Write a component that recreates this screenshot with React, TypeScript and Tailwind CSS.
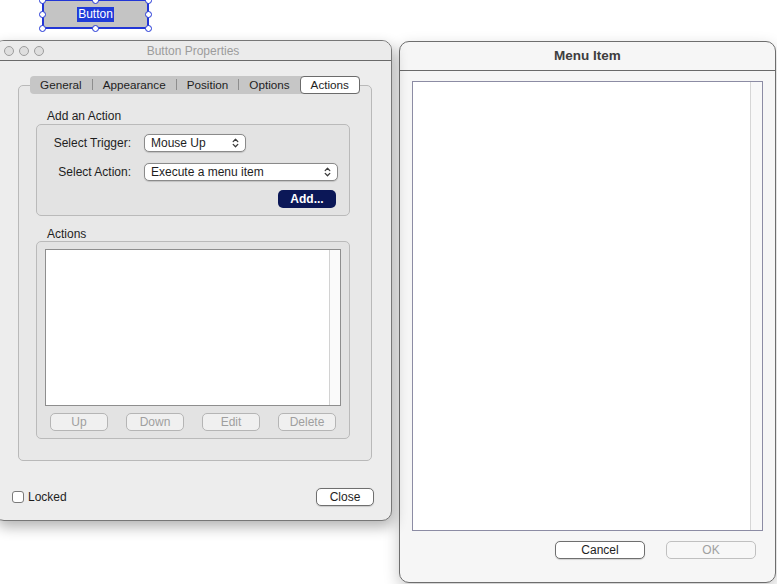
import type { ReactNode } from "react";

const tabs = ["General", "Appearance", "Position", "Options", "Actions"];
const listButtons = ["Up", "Down", "Edit", "Delete"];

function Chevrons() {
    return (
        <svg width="7" height="10" viewBox="0 0 7 10" fill="none" stroke="#3a3a3a" strokeWidth="1.3" strokeLinecap="round" strokeLinejoin="round">
            <path d="M1.2 3.6 3.5 1.3 5.8 3.6" />
            <path d="M1.2 6.4 3.5 8.7 5.8 6.4" />
        </svg>
    );
}

function Popup({ value, width }: { value: string; width: string }) {
    return (
        <div className={`ml-[13px] flex h-[18px] items-center justify-between rounded-[5px] border border-[#8a8a8a] bg-white pl-[6px] pr-[6px] shadow-[0_0.5px_1px_rgba(0,0,0,0.15)] ${width}`}>
            <span className="leading-none">{value}</span>
            <Chevrons />
        </div>
    );
}

function GroupBox({ children, className }: { children: ReactNode; className: string }) {
    return <div className={`ml-[17px] w-[314px] rounded-[5px] border border-[#bababa] bg-[#e3e3e3] ${className}`}>{children}</div>;
}

function Handle({ className }: { className: string }) {
    return <div className={`absolute h-[7px] w-[7px] rounded-full border border-[#2236d6] bg-white ${className}`} />;
}

function CanvasButton() {
    return (
        <div className="absolute left-[42px] top-[-1px] flex h-[30px] w-[107px] items-center justify-center border-2 border-[#2236d6] bg-[#c4c4c4]">
            <span className="bg-[#1f3bd9] px-[1px] text-[12px] leading-[15px] text-white">Button</span>
            <Handle className="left-[-5px] top-[-4px]" />
            <Handle className="left-[48px] top-[-4px]" />
            <Handle className="right-[-5px] top-[-4px]" />
            <Handle className="left-[-5px] top-[10px]" />
            <Handle className="right-[-5px] top-[10px]" />
            <Handle className="bottom-[-5px] left-[-5px]" />
            <Handle className="bottom-[-5px] left-[48px]" />
            <Handle className="bottom-[-5px] right-[-5px]" />
        </div>
    );
}

function ButtonPropertiesWindow() {
    return (
        <div className="absolute left-[-6px] top-[40px] z-10 flex h-[481px] w-[398px] flex-col overflow-hidden rounded-[10px] border border-[#777] bg-[#ededed] shadow-[2px_6px_14px_rgba(0,0,0,0.3)]">
            <div className="grid h-[20px] shrink-0 grid-cols-[1fr_auto_1fr] items-center border-b border-[#6a6a6a] bg-[#ebebeb]">
                <div className="flex gap-[5px] pl-[9px]">
                    <div className="h-[10px] w-[10px] rounded-full border border-[#9d9d9d] bg-[#dedede]" />
                    <div className="h-[10px] w-[10px] rounded-full border border-[#9d9d9d] bg-[#dedede]" />
                    <div className="h-[10px] w-[10px] rounded-full border border-[#9d9d9d] bg-[#dedede]" />
                </div>
                <span className="text-[12px] text-[#9c9c9c]">Button Properties</span>
                <div />
            </div>

            <div className="flex flex-col pt-[15px]">
                <div className="ml-[23px] flex w-[354px] flex-col items-center">
                    <div className="relative z-10 flex h-[18px] items-center rounded-[4px] bg-[#c6c6c6] text-[11.7px]">
                        {tabs.map((tab, i) => (
                            <div key={tab} className="flex items-center">
                                {i > 0 && i < tabs.length - 1 && <div className="h-[11px] w-px bg-[#8e8e8e]" />}
                                <div
                                    className={
                                        tab === "Actions"
                                            ? "flex h-[18px] items-center rounded-[4px] border border-[#6b6b6b] bg-white px-[10px]"
                                            : "px-[10px]"
                                    }
                                >
                                    {tab}
                                </div>
                            </div>
                        ))}
                    </div>

                    <div className="-mt-[9px] h-[376px] w-[354px] rounded-[5px] border border-[#b9b9b9] bg-[#e8e8e8] pt-[23px]">
                        <div className="ml-[28px] leading-[14px]">Add an Action</div>
                        <GroupBox className="mt-[1px] h-[92px] pt-[9px]">
                            <div className="flex items-center">
                                <span className="w-[94px] text-right">Select Trigger:</span>
                                <Popup value="Mouse Up" width="w-[102px]" />
                            </div>
                            <div className="mt-[11px] flex items-center">
                                <span className="w-[94px] text-right">Select Action:</span>
                                <Popup value="Execute a menu item" width="w-[194px]" />
                            </div>
                            <div className="mt-[9px] flex justify-end pr-[13px]">
                                <div className="flex h-[18px] w-[58px] items-center justify-center rounded-[5px] bg-[#0b1757] font-bold text-white">
                                    Add...
                                </div>
                            </div>
                        </GroupBox>

                        <div className="ml-[28px] mt-[11px] leading-[14px]">Actions</div>
                        <GroupBox className="h-[198px] pt-[7px]">
                            <div className="mx-[8px] flex h-[157px] justify-end border border-[#8e8e8e] bg-white">
                                <div className="w-[11px] border-l border-[#d2d2d2] bg-[#fafafa]" />
                            </div>
                            <div className="mt-[7px] flex justify-between px-[13px]">
                                {listButtons.map((label) => (
                                    <div
                                        key={label}
                                        className="flex h-[18px] w-[58px] items-center justify-center rounded-[5px] border border-[#b5b5b5] bg-[#f0f0f0] text-[#9f9f9f]"
                                    >
                                        {label}
                                    </div>
                                ))}
                            </div>
                        </GroupBox>
                    </div>
                </div>

                <div className="mt-[27px] flex items-center justify-between pl-[17px] pr-[17px]">
                    <div className="flex items-center gap-[4px]">
                        <div className="h-[12px] w-[12px] rounded-[3px] border border-[#7a7a7a] bg-white" />
                        <span>Locked</span>
                    </div>
                    <div className="flex h-[18px] w-[58px] items-center justify-center rounded-[5px] border border-[#6f6f6f] bg-white shadow-[0_0.5px_1px_rgba(0,0,0,0.15)]">
                        Close
                    </div>
                </div>
            </div>
        </div>
    );
}

function MenuItemWindow() {
    return (
        <div className="absolute left-[399px] top-[41px] flex h-[542px] w-[377px] flex-col overflow-hidden rounded-[10px] border border-[#6e6e6e] bg-[#f6f6f6] shadow-[0_6px_16px_rgba(0,0,0,0.22)]">
            <div className="flex h-[29px] shrink-0 items-center justify-center border-b border-[#6a6a6a]">
                <span className="text-[13.5px] font-bold text-[#3e3e3e]">Menu Item</span>
            </div>
            <div className="ml-[12px] mt-[10px] flex h-[450px] w-[351px] justify-end border border-[#8c8ca4] bg-white">
                <div className="w-[12px] border-l border-[#d6d6d6] bg-[#f8f8f8]" />
            </div>
            <div className="mt-[10px] flex justify-end gap-[21px] pr-[19px]">
                <div className="flex h-[18px] w-[90px] items-center justify-center rounded-[5px] border border-[#6f6f6f] bg-white shadow-[0_0.5px_1px_rgba(0,0,0,0.15)]">
                    Cancel
                </div>
                <div className="flex h-[18px] w-[90px] items-center justify-center rounded-[5px] border border-[#c0c0c0] bg-[#f7f7f7] text-[#a0a0a0]">
                    OK
                </div>
            </div>
        </div>
    );
}

export default function App() {
    return (
        <div className="relative h-[584px] w-[777px] overflow-hidden bg-white font-['Liberation_Sans',Arial,sans-serif] text-[12px] text-[#1e1e1e]">
            <CanvasButton />
            <ButtonPropertiesWindow />
            <MenuItemWindow />
        </div>
    );
}
